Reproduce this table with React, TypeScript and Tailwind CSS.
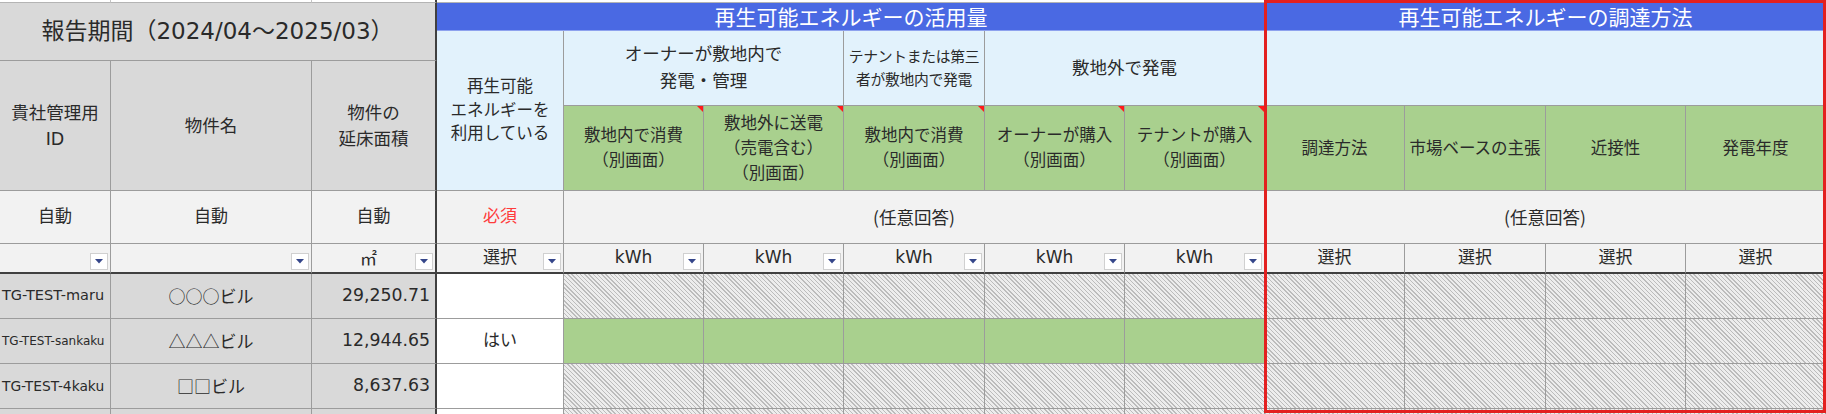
import React from "react";

const B = "border-r border-b border-r-[#9c9c9c] border-b-[#9c9c9c]";
const BT = "border-r-2 border-b border-r-[#404040] border-b-[#9c9c9c]";
const BU = "border-r border-b-2 border-r-[#9c9c9c] border-b-[#404040]";
const BUT = "border-r-2 border-b-2 border-r-[#404040] border-b-[#404040]";
const HATCH =
  "bg-[image:repeating-linear-gradient(45deg,#bcbcbc_0px,#bcbcbc_1px,#ededed_1px,#ededed_3px)]";
const CENTER = "flex items-center justify-center text-center";

function Dropdown() {
  return (
    <span className="absolute right-[2px] bottom-[2px] w-[18px] h-[17px] bg-white border border-[#d0d0d0] flex items-center justify-center">
      <svg width="8" height="5" viewBox="0 0 8 5">
        <path d="M0 0 L8 0 L4 4.5 Z" fill="#35468a" />
      </svg>
    </span>
  );
}

function Corner() {
  return (
    <span className="absolute top-0 right-0 w-[6px] h-[6px] bg-[#ff1a1a] [clip-path:polygon(0_0,100%_0,100%_100%)]" />
  );
}

const greenHeads: { col: string; lines: string[]; corner: boolean }[] = [
  { col: "col-start-5", lines: ["敷地内で消費", "（別画面）"], corner: true },
  { col: "col-start-6", lines: ["敷地外に送電", "（売電含む）", "（別画面）"], corner: true },
  { col: "col-start-7", lines: ["敷地内で消費", "（別画面）"], corner: true },
  { col: "col-start-8", lines: ["オーナーが購入", "（別画面）"], corner: true },
  { col: "col-start-9", lines: ["テナントが購入", "（別画面）"], corner: true },
  { col: "col-start-10", lines: ["調達方法"], corner: false },
  { col: "col-start-11", lines: ["市場ベースの主張"], corner: false },
  { col: "col-start-12", lines: ["近接性"], corner: false },
  { col: "col-start-13", lines: ["発電年度"], corner: false },
];

const kwhCols = ["col-start-5", "col-start-6", "col-start-7", "col-start-8", "col-start-9"];
const selCols = ["col-start-10", "col-start-11", "col-start-12", "col-start-13"];
const midCols = [
  "col-start-5",
  "col-start-6",
  "col-start-7",
  "col-start-8",
  "col-start-9",
  "col-start-10",
  "col-start-11",
  "col-start-12",
  "col-start-13",
];

const rows = [
  { row: "row-start-8", id: "TG-TEST-maru", idSize: "text-[14.5px]", name: "○○○ビル", area: "29,250.71", use: "", green: false },
  { row: "row-start-9", id: "TG-TEST-sankaku", idSize: "text-[12px]", name: "△△△ビル", area: "12,944.65", use: "はい", green: true },
  { row: "row-start-10", id: "TG-TEST-4kaku", idSize: "text-[13.8px]", name: "□□ビル", area: "8,637.63", use: "", green: false },
];

export default function App() {
  return (
    <div className="relative w-[1826px] h-[414px] overflow-hidden bg-white text-[#2a2a2a] font-['DejaVu_Sans','Noto_Sans_CJK_JP',sans-serif]">
      <div className="grid grid-cols-[111px_201px_125px_127px_140px_140px_141px_140px_140px_140px_141px_140px_140px] grid-rows-[3px_28px_30px_45px_85px_53px_30px_45px_45px_45px_5px]">
        {/* top strip */}
        <div className="col-start-1 row-start-1 bg-white border-r border-b border-r-[#c4c4c4] border-b-[#b4b4b4]" />
        <div className="col-start-2 row-start-1 bg-white border-r border-b border-r-[#c4c4c4] border-b-[#b4b4b4]" />
        <div className="col-start-3 row-start-1 bg-white border-r-2 border-b border-r-[#404040] border-b-[#b4b4b4]" />
        <div className="col-start-4 col-span-10 row-start-1 bg-white border-b border-b-[#b4b4b4]" />

        {/* title */}
        <div className={`col-start-1 col-span-3 row-start-2 row-span-2 bg-[#d9d9d9] ${BT} ${CENTER} text-[23px] leading-none`}>
          報告期間（2024/04～2025/03）
        </div>

        {/* blue bands */}
        <div className={`col-start-4 col-span-6 row-start-2 bg-[#4a69e3] border-b border-b-[#8ea2ee] ${CENTER} text-white text-[21px] leading-none font-['Noto_Sans_CJK_JP',sans-serif]`}>
          再生可能エネルギーの活用量
        </div>
        <div className={`col-start-10 col-span-4 row-start-2 bg-[#4a69e3] border-b border-b-[#8ea2ee] ${CENTER} text-white text-[21px] leading-none font-['Noto_Sans_CJK_JP',sans-serif]`}>
          再生可能エネルギーの調達方法
        </div>

        {/* gray headers */}
        <div className={`col-start-1 row-start-4 row-span-2 bg-[#d9d9d9] ${B} ${CENTER} text-[17.5px] leading-[26px]`}>
          <span>
            貴社管理用
            <br />
            ID
          </span>
        </div>
        <div className={`col-start-2 row-start-4 row-span-2 bg-[#d9d9d9] ${B} ${CENTER} text-[17.5px] leading-[26px]`}>
          物件名
        </div>
        <div className={`col-start-3 row-start-4 row-span-2 bg-[#d9d9d9] ${BT} ${CENTER} text-[17.5px] leading-[26px]`}>
          <span>
            物件の
            <br />
            延床面積
          </span>
        </div>

        {/* light blue headers */}
        <div className={`col-start-4 row-start-3 row-span-3 bg-[#e2f2fc] ${B} ${CENTER} text-[16.5px] leading-[23.5px]`}>
          <span>
            再生可能
            <br />
            エネルギーを
            <br />
            利用している
          </span>
        </div>
        <div className={`col-start-5 col-span-2 row-start-3 row-span-2 bg-[#e2f2fc] ${B} ${CENTER} text-[17.5px] leading-[27px]`}>
          <span>
            オーナーが敷地内で
            <br />
            発電・管理
          </span>
        </div>
        <div className={`col-start-7 row-start-3 row-span-2 bg-[#e2f2fc] ${B} ${CENTER} text-[14.8px] leading-[23px] tracking-[-0.3px]`}>
          <span>
            テナントまたは第三
            <br />
            者が敷地内で発電
          </span>
        </div>
        <div className={`col-start-8 col-span-2 row-start-3 row-span-2 bg-[#e2f2fc] ${B} ${CENTER} text-[17.5px] leading-[27px]`}>
          敷地外で発電
        </div>
        <div className={`col-start-10 col-span-4 row-start-3 row-span-2 bg-[#e2f2fc] border-b border-b-[#9c9c9c]`} />

        {/* green headers */}
        {greenHeads.map((g) => (
          <div key={g.col + g.lines[0]} className={`${g.col} row-start-5 relative bg-[#a9d08e] ${B} ${CENTER} text-[16.5px] leading-[25px] whitespace-nowrap`}>
            <span>
              {g.lines.map((l, i) => (
                <React.Fragment key={i}>
                  {i > 0 && <br />}
                  {l}
                </React.Fragment>
              ))}
            </span>
            {g.corner && <Corner />}
          </div>
        ))}

        {/* 自動 row */}
        <div className={`col-start-1 row-start-6 bg-[#f2f2f2] ${B} ${CENTER} text-[17px]`}>自動</div>
        <div className={`col-start-2 row-start-6 bg-[#f2f2f2] ${B} ${CENTER} text-[17px]`}>自動</div>
        <div className={`col-start-3 row-start-6 bg-[#f2f2f2] ${BT} ${CENTER} text-[17px]`}>自動</div>
        <div className={`col-start-4 row-start-6 bg-[#f2f2f2] ${B} ${CENTER} text-[17px] text-[#ff3b3b]`}>必須</div>
        <div className={`col-start-5 col-span-5 row-start-6 bg-[#f2f2f2] ${B} ${CENTER} text-[17.5px] font-['Noto_Sans_CJK_JP',sans-serif]`}>
          (任意回答)
        </div>
        <div className={`col-start-10 col-span-4 row-start-6 bg-[#f2f2f2] ${B} ${CENTER} text-[17.5px] font-['Noto_Sans_CJK_JP',sans-serif]`}>
          (任意回答)
        </div>

        {/* unit row */}
        <div className={`col-start-1 row-start-7 relative bg-[#f2f2f2] ${BU}`}>
          <Dropdown />
        </div>
        <div className={`col-start-2 row-start-7 relative bg-[#f2f2f2] ${BU}`}>
          <Dropdown />
        </div>
        <div className={`col-start-3 row-start-7 relative bg-[#f2f2f2] ${BUT} ${CENTER} text-[17px] font-['Noto_Sans_CJK_JP',sans-serif]`}>
          <span className="-ml-[10px]">㎡</span>
          <Dropdown />
        </div>
        <div className={`col-start-4 row-start-7 relative bg-[#f2f2f2] ${BU} ${CENTER} text-[17px]`}>
          選択
          <Dropdown />
        </div>
        {kwhCols.map((c) => (
          <div key={c} className={`${c} row-start-7 relative bg-[#f2f2f2] ${BU} ${CENTER} text-[17px]`}>
            kWh
            <Dropdown />
          </div>
        ))}
        {selCols.map((c) => (
          <div key={c} className={`${c} row-start-7 bg-[#f2f2f2] ${BU} ${CENTER} text-[17px]`}>
            選択
          </div>
        ))}

        {/* data rows */}
        {rows.map((r) => (
          <React.Fragment key={r.id}>
            <div className={`col-start-1 ${r.row} bg-[#d9d9d9] ${B} flex items-center pl-[2px] ${r.idSize} whitespace-nowrap overflow-hidden`}>
              {r.id}
            </div>
            <div className={`col-start-2 ${r.row} bg-[#d9d9d9] ${B} ${CENTER} text-[17px] font-['Noto_Sans_CJK_JP',sans-serif]`}>
              {r.name}
            </div>
            <div className={`col-start-3 ${r.row} bg-[#d9d9d9] ${BT} flex items-center justify-end pr-[5px] text-[17.3px]`}>
              {r.area}
            </div>
            <div className={`col-start-4 ${r.row} bg-white ${B} ${CENTER} text-[17px]`}>{r.use}</div>
            {midCols.map((c, i) => (
              <div
                key={c}
                className={`${c} ${r.row} ${B} ${r.green && i < 5 ? "bg-[#a9d08e]" : HATCH}`}
              />
            ))}
          </React.Fragment>
        ))}

        {/* partial row */}
        <div className="col-start-1 row-start-11 bg-[#d9d9d9] border-r border-r-[#9c9c9c]" />
        <div className="col-start-2 row-start-11 bg-[#d9d9d9] border-r border-r-[#9c9c9c]" />
        <div className="col-start-3 row-start-11 bg-[#d9d9d9] border-r-2 border-r-[#404040]" />
        <div className="col-start-4 row-start-11 bg-white border-r border-r-[#9c9c9c]" />
        {midCols.map((c) => (
          <div key={c} className={`${c} row-start-11 border-r border-r-[#9c9c9c] ${HATCH}`} />
        ))}
      </div>

      {/* red highlight frame */}
      <div className="absolute left-[1264px] top-0 w-[562px] h-[413px] border-[3px] border-[#e3201f] pointer-events-none" />
    </div>
  );
}
